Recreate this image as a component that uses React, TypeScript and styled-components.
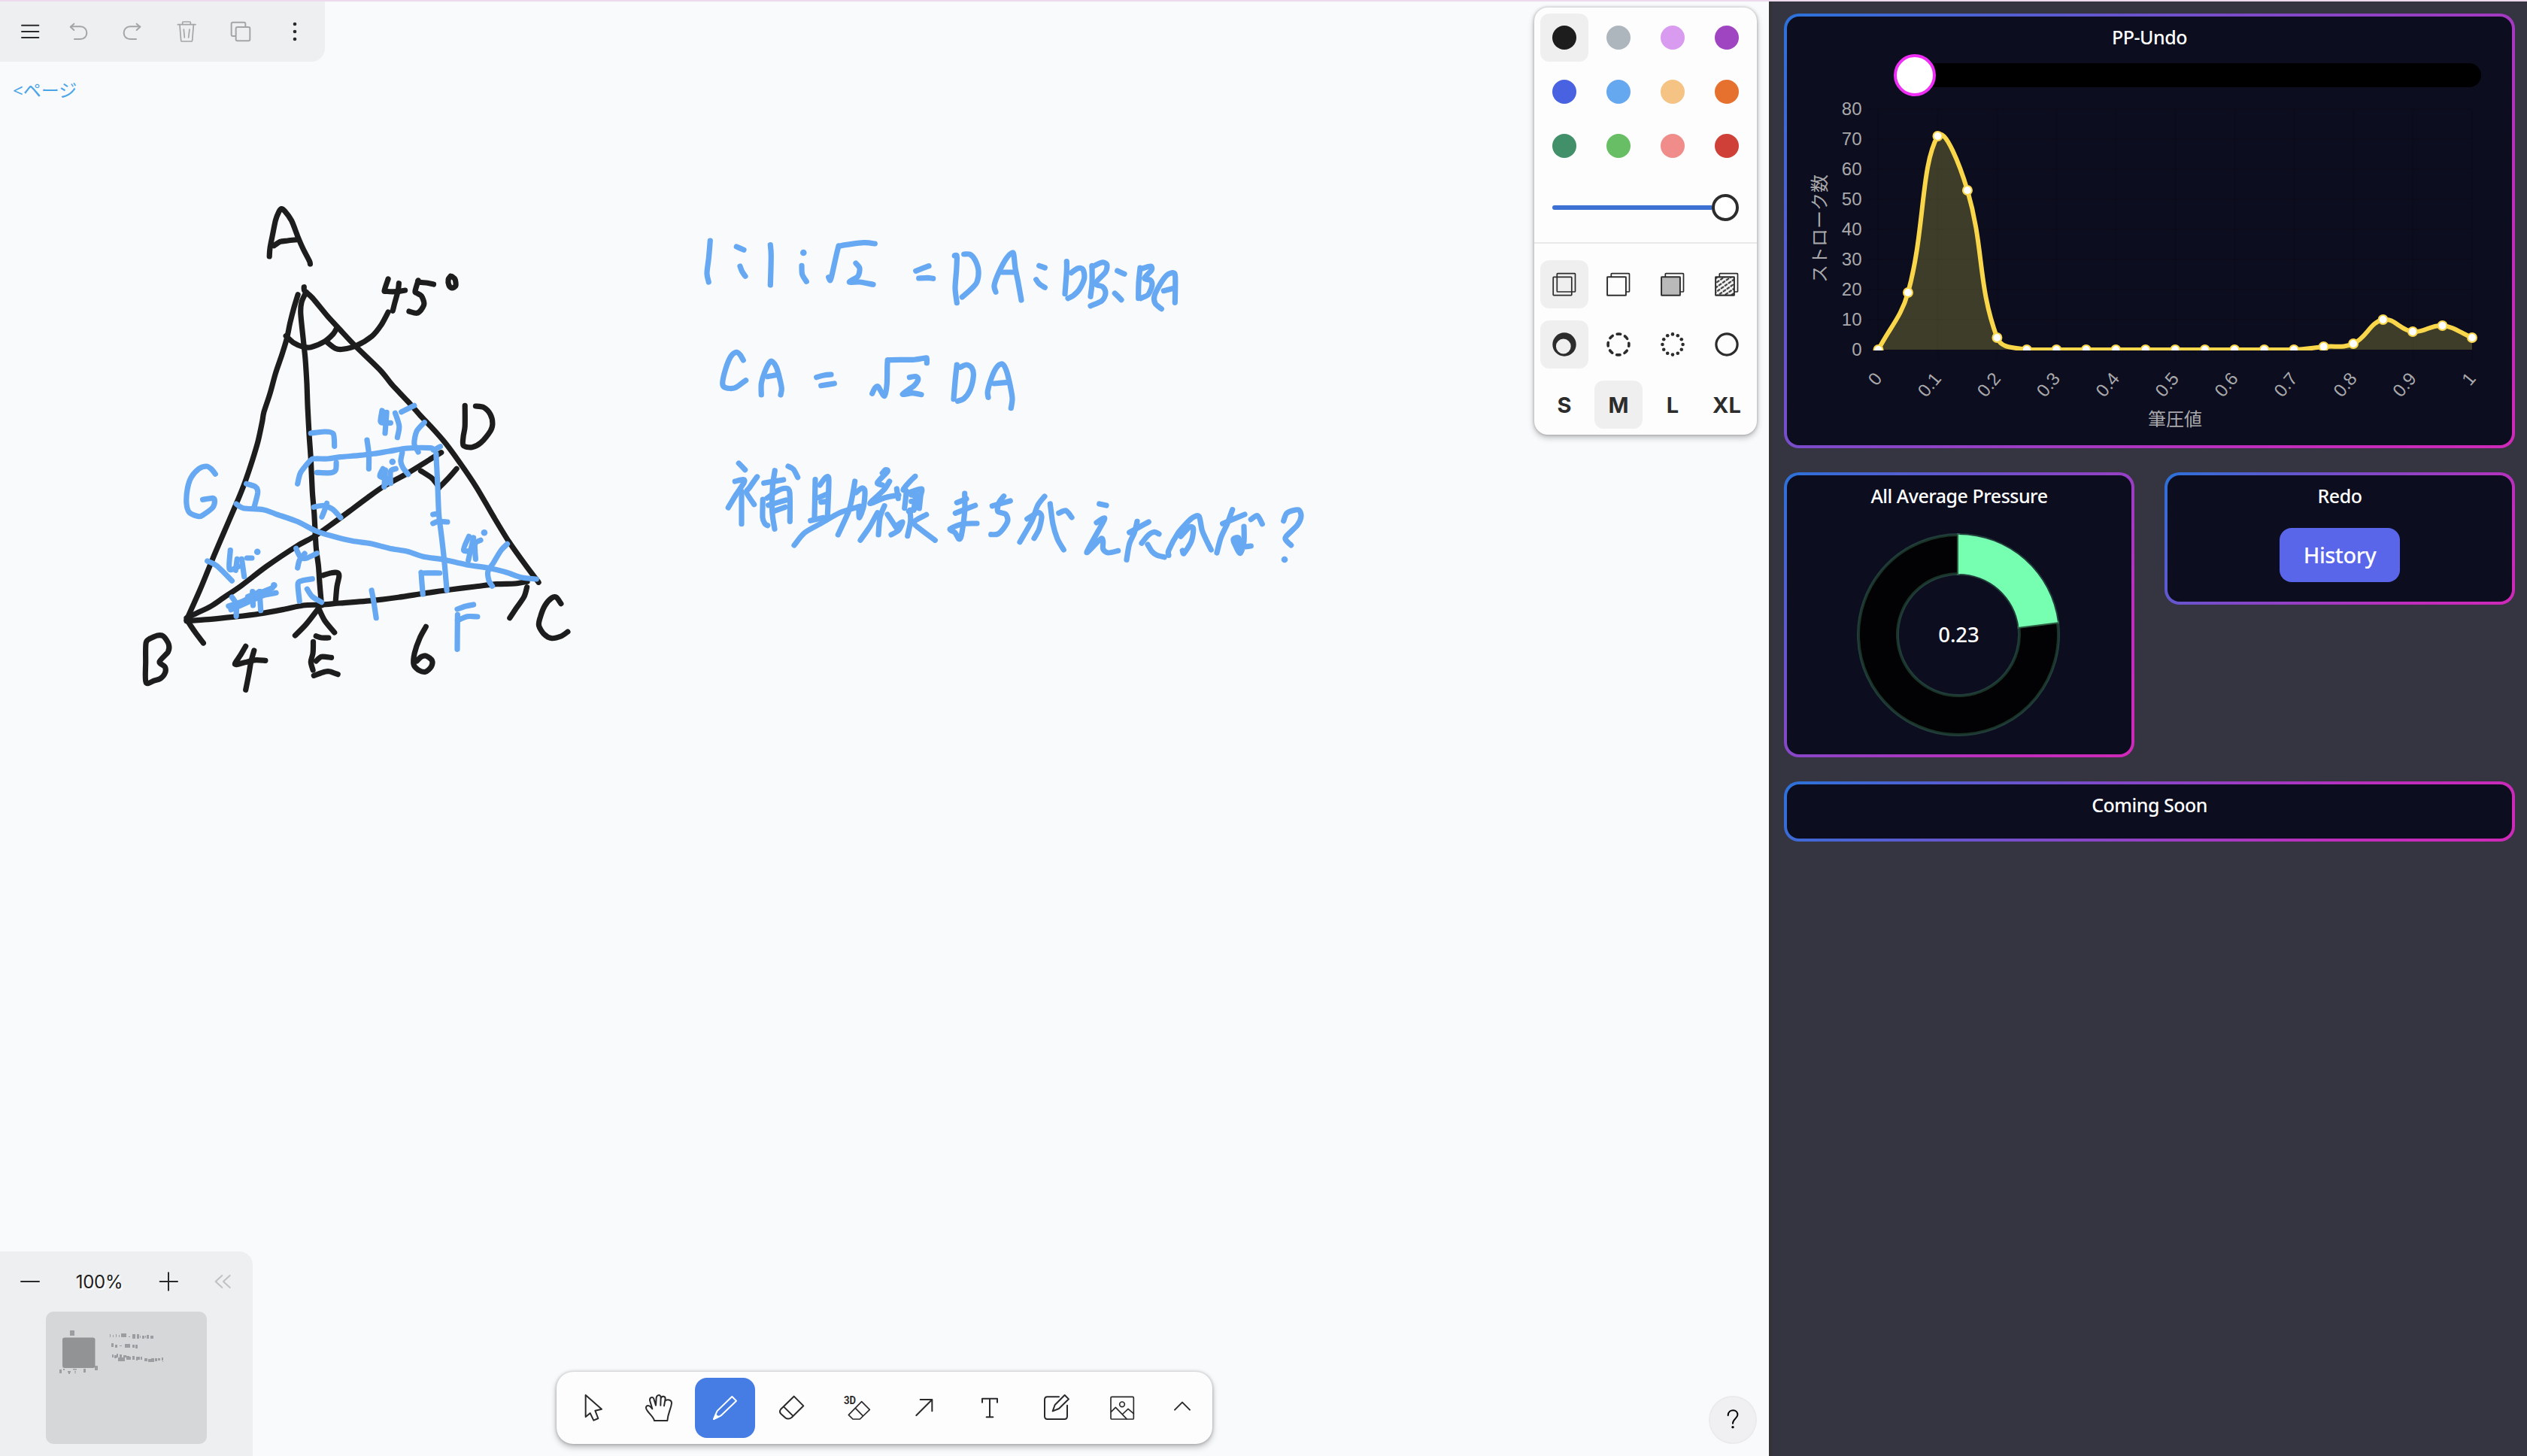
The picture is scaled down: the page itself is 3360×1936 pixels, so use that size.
import React from "react";
import styled, { createGlobalStyle } from "styled-components";

const UI_FONT = `"Noto Sans", "Noto Sans CJK JP", sans-serif`;
const AXIS_FONT = `"Liberation Sans", "Noto Sans CJK JP", sans-serif`;
const INK = "#1d1d1d";
const BLUE = "#66a8f2";

const GlobalStyle = createGlobalStyle`
  *, *::before, *::after { box-sizing: border-box; }
  html, body { margin: 0; padding: 0; }
  body { font-family: ${UI_FONT}; overflow: hidden; }
  svg { display: block; }
  button { border: 0; padding: 0; margin: 0; background: none; font: inherit; color: inherit; }
`;

/* ---------- page frame ---------- */

const Page = styled.div`
  display: grid;
  grid-template-columns: 2352px 1fr;
  width: 3360px;
  height: 1936px;
  border-top: 2px solid #efd9ec;
  background: #353541;
`;

const Board = styled.main`
  position: relative;
  display: flex;
  flex-direction: column;
  justify-content: space-between;
  height: 1934px;
  background: #f9fafc;
  overflow: hidden;
`;

const InkLayer = styled.svg`
  position: absolute;
  left: 0;
  top: -2px;
`;

const BoardTop = styled.div`
  position: relative;
  display: flex;
  justify-content: space-between;
  align-items: flex-start;
`;

const BoardBottom = styled.div`
  position: relative;
  display: grid;
  grid-template-columns: 1fr auto 1fr;
  align-items: end;
`;

const IconButton = styled.button<{ $w?: number; $dim?: boolean; $first?: boolean }>`
  display: flex;
  align-items: center;
  justify-content: center;
  width: ${(p) => p.$w ?? 72}px;
  height: 80px;
  padding-left: ${(p) => (p.$first ? 12 : 0)}px;
  color: ${(p) => (p.$dim ? "#a4a5a7" : "#2a2a2c")};
`;

const ActionBar = styled.div`
  display: flex;
  width: 432px;
  height: 80px;
  padding-right: 4px;
  background: #eeeff1;
  border-bottom-right-radius: 18px;
`;

const PageLink = styled.a`
  display: block;
  width: max-content;
  margin: 20px 0 0 17px;
  font-size: 24px;
  line-height: 36px;
  color: #4aa4e8;
`;

/* ---------- style panel ---------- */

const StylePanel = styled.section`
  width: 296px;
  height: 568px;
  margin: 8px 16px 0 0;
  background: #fdfdfd;
  border-radius: 18px;
  box-shadow: 0 4px 8px rgba(0, 0, 0, 0.24), 0 0 4px rgba(0, 0, 0, 0.26);
`;

const Cells = styled.div<{ $rowGap: number; $top: number }>`
  display: grid;
  grid-template-columns: repeat(4, 64px);
  column-gap: 8px;
  row-gap: ${(p) => p.$rowGap}px;
  padding: ${(p) => p.$top}px 8px 0;
`;

const Cell = styled.button<{ $on?: boolean }>`
  display: flex;
  align-items: center;
  justify-content: center;
  height: 64px;
  border-radius: 12px;
  background: ${(p) => (p.$on ? "#efefef" : "transparent")};
  font-family: Inter, sans-serif;
  font-weight: 700;
  font-size: 29px;
  color: #2c2c2c;
`;

const Swatch = styled.span<{ $color: string }>`
  width: 32px;
  height: 32px;
  border-radius: 50%;
  background: ${(p) => p.$color};
`;

const OpacityRow = styled.div`
  display: flex;
  align-items: center;
  height: 96px;
  padding: 3px 24px 0;
`;

const OpacityLine = styled.div`
  width: 214px;
  height: 6px;
  margin-right: -2px;
  border-radius: 3px;
  background: #3c70d2;
`;

const OpacityThumb = styled.div`
  width: 36px;
  height: 36px;
  border: 4px solid #2c2c2c;
  border-radius: 50%;
  background: #fff;
`;

const Divider = styled.hr`
  height: 2px;
  margin: 0;
  border: 0;
  background: #e8e8e8;
`;

/* ---------- bottom widgets ---------- */

const Navigator = styled.div`
  width: 336px;
  height: 272px;
  background: #eeeff1;
  border-top-right-radius: 18px;
`;

const ZoomRow = styled.div`
  display: flex;
  align-items: center;
  height: 80px;
  padding: 0 4px;
`;

const ZoomLabel = styled.div`
  width: 112px;
  text-align: center;
  font-family: Inter, sans-serif;
  font-size: 24px;
  letter-spacing: -0.3px;
  color: #1d1d1d;
  text-shadow: 2px 2px 0 #fff;
`;

const Minimap = styled.div`
  width: 214px;
  height: 176px;
  margin-left: 61px;
  border-radius: 10px;
  background: #d6d7d9;
  overflow: hidden;
`;

const ToolBar = styled.div`
  display: flex;
  width: 872px;
  height: 96px;
  margin-bottom: 16px;
  padding: 0 4px;
  background: #fdfdfd;
  border-radius: 22px;
  box-shadow: 0 4px 8px rgba(0, 0, 0, 0.26), 0 0 4px rgba(0, 0, 0, 0.24);
`;

const Tool = styled.button<{ $on?: boolean; $w?: number }>`
  display: flex;
  align-items: center;
  justify-content: center;
  width: ${(p) => (p.$w ?? 88) - 8}px;
  height: 80px;
  margin: 8px 4px;
  border-radius: 16px;
  background: ${(p) => (p.$on ? "#467de5" : "transparent")};
  color: ${(p) => (p.$on ? "#fff" : "#2a2a2c")};
`;

const HelpButton = styled.button`
  justify-self: end;
  display: flex;
  align-items: center;
  justify-content: center;
  width: 64px;
  height: 64px;
  margin: 0 16px 16px 0;
  border: 2px solid #ebebee;
  border-radius: 50%;
  background: #f0f0f2;
`;

/* ---------- dashboard ---------- */

const Dashboard = styled.aside`
  display: flex;
  flex-direction: column;
  gap: 32px;
  height: 1934px;
  padding: 16px 16px 0;
  border-left: 4px solid #333336;
  background: #353541;
`;

const CardRow = styled.div`
  display: grid;
  grid-template-columns: 1fr 1fr;
  column-gap: 40px;
  align-items: start;
`;

const Card = styled.section<{ $h: number }>`
  display: flex;
  flex-direction: column;
  align-items: center;
  height: ${(p) => p.$h}px;
  border: 4px solid transparent;
  border-radius: 20px;
  background:
    linear-gradient(#0c0d1e, #0c0d1e) padding-box,
    linear-gradient(135deg, #2b72da 0%, #7a4cca 38%, #c02dbc 78%, #cf29b8 100%) border-box;
`;

const CardTitle = styled.h2`
  margin: 9px 0 1px;
  font-size: 25px;
  font-weight: 500;
  line-height: 36px;
  letter-spacing: -0.5px;
  color: #fff;
`;

const PressureTrack = styled.div`
  align-self: flex-start;
  display: flex;
  align-items: center;
  width: 777px;
  height: 32px;
  margin: 16px 0 12px 146px;
  border-radius: 16px;
  background: #000;
`;

const PressureThumb = styled.div`
  width: 56px;
  height: 56px;
  margin-left: -4px;
  border: 4px solid #ee2df5;
  border-radius: 50%;
  background: #fff;
`;

const HistoryButton = styled.button`
  width: 160px;
  height: 72px;
  margin-top: 24px;
  padding-bottom: 2px;
  border-radius: 16px;
  background: #5a66ea;
  color: #fff;
  font-size: 29px;
  font-weight: 500;
  letter-spacing: -0.5px;
`;

const DonutWrap = styled.div`
  margin-top: 26px;
`;

/* ---------- icons ---------- */

/** Stroked icon on a 120-unit canvas; cx/cy give the middle of the drawing. */
function Glyph({ cx, cy, w = 6, children }: { cx: number; cy: number; w?: number; children: React.ReactNode }) {
  return (
    <svg
      width={40}
      height={40}
      viewBox={`${cx - 60} ${cy - 60} 120 120`}
      fill="none"
      stroke="currentColor"
      strokeWidth={w}
      strokeLinecap="round"
      strokeLinejoin="round"
    >
      {children}
    </svg>
  );
}

const actions = [
  { cx: 120, first: true, w: 68, art: <path d="M87 101H154M87 126H154M87 150H154" /> },
  { cx: 312, dim: true, art: <path d="M297 156H321C337 156 346 144 346 131C346 118 337 106 321 106H282M295 95L281 107L295 120" /> },
  { cx: 528, dim: true, art: <path d="M543 156H519C503 156 494 144 494 131C494 118 503 106 519 106H559M545 95L559 107L545 120" /> },
  {
    cx: 744,
    dim: true,
    art: (
      <path
        strokeWidth={5}
        d="M709 98H780M728 97V90Q728 87 731 87H757Q760 87 760 90V97M717 100L722 161Q722 165 726 165H763Q767 165 767 161L772 100M733 117L736 150M756 117L752 150"
      />
    ),
  },
  {
    cx: 960,
    dim: true,
    art: (
      <>
        <rect x="941" y="108" width="56" height="55" rx="6" />
        <path d="M938 144H929Q923 144 923 138V95Q923 89 929 89H973Q979 89 979 95V105" />
      </>
    ),
  },
  {
    cx: 1176,
    art: (
      <g fill="currentColor" stroke="none">
        <circle cx="1176" cy="96" r="7" />
        <circle cx="1176" cy="126" r="7" />
        <circle cx="1176" cy="156" r="7" />
      </g>
    ),
  },
];

const tools = [
  { cx: 174, art: <path d="M146 135V222L164 207L178 236L196 228L184 197L210 191Z" /> },
  {
    cx: 438,
    art: (
      <path d="M420 237C418 222 396 208 388 190C383 177 397 172 407 184L412 190L402 156C401 142 415 141 418 150L426 176L428 146C430 132 446 132 446 145L445 176M446 148C450 136 464 138 464 150L459 178M464 158C470 150 490 153 489 168C487 188 475 205 472 237H420" />
    ),
  },
  {
    cx: 702,
    on: true,
    art: (
      <>
        <path d="M657 231L669 202Q670 199 673 196L730 141L747 158L690 213Q687 216 684 218Z" />
        <path d="M657 231L665 210Q668 218 678 221Z" fill="currentColor" strokeWidth={3} />
      </>
    ),
  },
  { cx: 966, art: <path d="M924 192L977 140L1015 178L968 224Q956 234 943 226L926 211Q917 202 924 192ZM936 181L973 218" /> },
  {
    cx: 1230,
    art: (
      <>
        <path strokeWidth={5} d="M1195 214L1247 161L1279 193L1240 231H1212ZM1222 187L1252 218" />
        <text
          x="1176"
          y="172"
          fontFamily="Roboto, sans-serif"
          fontWeight={700}
          fontSize={45}
          fill="currentColor"
          stroke="none"
          textLength={48}
          lengthAdjust="spacingAndGlyphs"
        >
          3D
        </text>
      </>
    ),
  },
  { cx: 174, art: <path d="M145 216L208 153M161 153H208V199" /> },
  { cx: 438, art: <path d="M408 164V149H468V164M438 149V223M425 223H451" /> },
  {
    cx: 702,
    art: <path d="M714 142H668Q657 142 657 153V220Q657 231 668 231H736Q747 231 747 220V176M689 199L698 174L737 135L753 151L714 189Z" />,
  },
  {
    cx: 966,
    art: (
      <g strokeWidth={5}>
        <rect x="921" y="142" width="91" height="89" rx="4" />
        <circle cx="966" cy="172" r="10" />
        <path d="M922 202L940 184L984 230M969 210L990 190L1012 209" />
      </g>
    ),
  },
  { cx: 1206, w: 72, art: <path d="M1176 194L1206 164L1236 194" /> },
];

function Squares({ fill }: { fill: "none" | "semi" | "solid" | "pattern" }) {
  const faces = { none: "none", semi: "#fdfdfd", solid: "#b9b9b9", pattern: "url(#hatch)" };
  return (
    <svg width={32} height={32} viewBox="0 0 32 32" stroke="#2c2c2c" strokeWidth={1.7}>
      <defs>
        <pattern id="hatch" width="6" height="5" patternUnits="userSpaceOnUse" patternTransform="rotate(-35)">
          <path d="M0.8 2.5H4" stroke="#1d1d1d" strokeWidth="2.2" strokeLinecap="round" />
        </pattern>
      </defs>
      <rect x="6.3" y="1.6" width="24.2" height="24.4" rx="0.8" fill="none" />
      {fill !== "none" && <rect x="1.2" y="6.4" width="24.6" height="24.2" fill="#fdfdfd" />}
      <rect x="1.2" y="6.4" width="24.6" height="24.2" rx="0.8" fill={faces[fill]} />
    </svg>
  );
}

function Rings({ dash }: { dash: "draw" | "dashed" | "dotted" | "solid" }) {
  return (
    <svg width={32} height={32} viewBox="0 0 32 32" fill="none" stroke="#2c2c2c">
      {dash === "draw" && (
        <path
          fill="#2c2c2c"
          stroke="none"
          fillRule="evenodd"
          d="M16 0.3A15.7 15.7 0 1 1 16 31.7A15.7 15.7 0 1 1 16 0.3ZM14.8 8.6A9.9 9.9 0 1 0 14.8 28.4A9.9 9.9 0 1 0 14.8 8.6Z"
        />
      )}
      {dash === "dashed" && (
        <circle cx="16" cy="16" r="13.9" strokeWidth="3.6" strokeLinecap="round" strokeDasharray="4.6 6.317" strokeDashoffset="2.3" />
      )}
      {dash === "dotted" &&
        Array.from({ length: 12 }, (_, i) => (
          <circle
            key={i}
            cx={16 + 13.6 * Math.cos((i * Math.PI) / 6)}
            cy={16 + 13.6 * Math.sin((i * Math.PI) / 6)}
            r="2.3"
            fill="#2c2c2c"
            stroke="none"
          />
        ))}
      {dash === "solid" && <circle cx="16" cy="16" r="14.1" strokeWidth="3.2" />}
    </svg>
  );
}

/* ---------- ink ---------- */

type Pt = [number, number];
type Sheet = { x: number; y: number; sx: number; sy: number; color: string; strokes: string };

/** Each sheet lists pen strokes separated by "/", in its own grid of units. */
const sheets: Sheet[] = [
  {
    x: 150, y: 250, sx: 2.45, sy: 3, color: INK,
    strokes: `510,273 512,240 520,190 530,130 541,95 549,83 560,92 582,130 603,195 620,243 640,290 643,303
    / 525,230 545,214 570,210 600,206
    / 897,363 885,408 890,412 925,413 952,408 / 932,380 929,410 918,460 912,490
    / 1045,384 1025,379 995,375 995,370 985,412 990,419 1005,430 1014,460 1005,485 990,499 965,492
    / 1100,352 1093,365 1095,388 1105,399 1117,390 1115,365 1105,353 1100,352
    / 564,590 590,618 618,633 645,635 690,612 718,582 730,557
    / 695,612 725,640 750,643 795,628 845,590 875,545 897,495`,
  },
  {
    x: 150, y: 560, sx: 2.45, sy: 3, color: INK,
    strokes: `603,-505 590,-452 577,-390 567,-330 550,-262 530,-190 512,-110 492,-35 487,0 473,80 455,155 430,245 402,330 365,435 325,550 285,670 240,793
    / 630,-515 615,-475 612,-430 620,-330 627,-250 632,-150 635,-50 640,60 645,150 650,280 656,370 662,500 670,580 674,650 680,735
    / 623,-535 625,-520 650,-492 700,-418 740,-365 790,-300 870,-205 910,-145 960,-80 1000,-25 1035,20 1085,90 1130,165 1185,265 1240,380 1290,480 1345,575 1387,643
    / 1147,-62 1147,20 1142,60 1142,97 1170,104 1200,85 1230,40 1237,10 1230,-27 1208,-55 1182,-60
    / 240,785 275,765 320,738 360,705 420,655 500,580 600,498 656,460 720,405 770,360 830,305 885,258 960,208 1030,155 1070,125
    / 240,797 320,790 400,780 480,768 560,750 620,735 680,732 740,726 850,715 930,703 1010,688 1100,672 1180,660 1250,650 1310,648 1350,640
    / 245,800 270,845 295,885 / 668,750 630,810 594,855 / 670,745 690,795 722,843
    / 685,615 712,605 733,605 737,620 730,660 726,715
    / 1349,662 1340,700 1315,745 1293,785
    / 1003,198 1040,228 1062,262 1065,262 1095,225 1120,190
    / 120,868 108,885 107,960 108,1042 135,1035 155,1027 170,1005 170,980 152,960 180,920 182,890 165,858 145,855 120,868
    / 433,898 415,935 398,970 430,962 465,953 497,955 / 460,915 450,960 443,1010 433,1072
    / 653,880 652,925 645,960 652,993 / 662,857 680,864 703,864 / 662,957 680,940 712,943 / 655,1015 690,1000 705,998 733,1010
    / 1020,820 1000,865 983,925 980,970 995,992 1018,1000 1037,980 1040,955 1022,937 1005,940 990,957
    / 1460,728 1445,703 1430,705 1408,735 1393,780 1388,815 1405,850 1430,866 1460,858 1482,840`,
  },
  {
    x: 150, y: 560, sx: 2.45, sy: 3, color: BLUE,
    strokes: `334,211 320,190 305,180 280,190 255,225 243,270 240,330 250,365 280,380 293,375 325,345 332,318 325,307 293,313
    / 435,250 465,262 472,285 460,345
    / 402,330 425,347 490,353 530,370 600,400 660,437 710,457 780,478 840,488 900,507 960,520 1010,540 1080,553 1150,572 1230,587 1280,602 1330,623 1380,630
    / 645,48 690,42 718,50 722,100
    / 602,250 612,205 645,155 660,150 700,150 740,143 800,137 850,130 900,120 960,108 1035,107 1045,115 1067,101
    / 665,205 710,206 726,195 728,165 / 828,75 834,130 834,190
    / 1015,5 990,40 982,90 995,123
    / 877,-42 872,0 880,7 905,7 / 892,-35 887,48 / 884,-35 883,0 / 920,-32 933,20 927,65 / 940,-37 982,-62
    / 943,125 938,160 945,185 962,212
    / 880,190 870,220 900,230 / 888,195 884,262 / 922,190 905,200 905,248 / 880,210 890,250 / 911,162
    / 1053,130 1058,250 1062,370 1070,450 1080,560 1088,675
    / 1043,372 1055,370 / 1043,408 1060,400 1090,402
    / 1010,690 1005,610 1010,606 1065,606
    / 1285,490 1265,515 1240,565 1222,600 1225,635 1236,658
    / 1160,460 1143,515 1180,515 / 1175,465 1158,555 / 1198,475 1180,490 1182,550 / 1210,445
    / 655,343 685,337 715,350 742,385 / 697,328 690,355 681,382
    / 597,508 610,540 630,547 665,527 / 625,528 608,555 602,585
    / 608,718 603,650 615,637 650,629 / 633,670 650,700 680,722
    / 308,558 340,578 388,637
    / 383,515 380,590 410,580 / 405,550 400,595 / 420,550 428,620 / 437,546 453,546 / 471,521
    / 377,738 420,720 470,690 520,665 / 385,752 440,722 490,695 532,685 / 388,702 402,730 402,778 / 455,680 457,735 / 478,680 482,755 / 440,700 480,680 / 525,655
    / 843,675 850,720 858,785
    / 1122,750 1150,738 1175,732 / 1123,772 1122,910 / 1123,795 1155,779 1188,780`,
  },
  {
    x: 900, y: 280, sx: 3, sy: 3, color: BLUE,
    strokes: `133,120 127,190 120,250 127,285 / 238,144 267,157 / 252,222 260,243 273,262
    / 373,137 376,180 373,297 / 505,168 / 498,220 500,255 517,283
    / 605,266 612,278 620,250 643,150 655,140 745,128 790,132
    / 714,210 729,230 722,262 688,285 730,285 783,295
    / 953,241 1005,221 / 965,270 1000,268 1022,271
    / 1108,180 1117,182 1115,240 1110,310 1117,368 / 1145,174 1170,175 1190,198 1203,240 1197,285 1175,312 1138,345
    / 1272,325 1266,298 1285,245 1315,190 1338,168 1344,178 1350,230 1362,290 1374,357 / 1297,246 1350,246
    / 265,597 252,575 237,565 215,582 195,630 182,690 195,707 232,707 275,677
    / 337,735 337,690 350,645 370,605 382,603 397,625 410,670 418,710 414,735 / 362,662 402,655
    / 557,665 590,656 615,654 / 575,698 628,690
    / 779,730 790,708 803,703 828,740 838,690 840,605 850,596 940,595 990,588 997,590 997,608
    / 928,665 955,662 962,675 945,700 900,732 940,728 975,734
    / 1117,615 1110,680 1104,752 / 1130,625 1155,615 1177,628 1183,660 1170,715 1145,750 1120,760
    / 1242,745 1240,720 1258,660 1280,620 1300,613 1315,640 1330,700 1338,750 1333,788 / 1265,690 1322,685
    / 247,1008 272,1034 / 232,1080 265,1073 268,1085 235,1135 205,1185 / 258,1120 258,1250 / 320,1062 290,1105 278,1125 308,1172
    / 347,1087 425,1074 / 391,1037 382,1100 380,1200 390,1270 / 343,1152 342,1225 352,1250 362,1256
    / 360,1147 400,1118 435,1108 450,1125 451,1240 / 365,1175 435,1155 / 385,1200 432,1183 / 444,1020 465,1032 482,1064
    / 552,1073 549,1225 / 570,1095 590,1068 603,1062 606,1085 601,1215 / 565,1145 600,1130 / 575,1163 600,1160 / 533,1237 585,1225
    / 468,1335 510,1285 580,1245 650,1205 730,1180 / 710,1080 700,1140 685,1200 643,1293 / 715,1125 738,1107 750,1120 745,1180 728,1225 726,1190
    / 820,1047 832,1034 840,1041 800,1085 820,1095 / 848,1080 825,1115 770,1168 830,1145 885,1135 / 877,1110 883,1148
    / 828,1178 810,1225 804,1293 / 800,1205 770,1260 732,1315 / 840,1212 875,1265 / 855,1293 885,1275 900,1243 880,1255
    / 940,1070 951,1060 930,1080 903,1113 915,1120 908,1187 / 925,1125 975,1110 972,1140 967,1188 / 935,1135 968,1138 / 935,1160 965,1162 / 925,1200 965,1180 / 955,1120 945,1195
    / 930,1195 932,1240 920,1298 / 995,1213 945,1243 970,1270 1030,1315
    / 1117,1165 1155,1150 / 1111,1207 1190,1176 / 1148,1128 1148,1200 1135,1295 1125,1310 1110,1285 1090,1270 1140,1250 1197,1248
    / 1258,1178 1330,1158 / 1304,1139 1285,1165 1280,1200 1310,1210 1320,1235 1305,1265 1280,1290 1253,1292`,
  },
  {
    x: 1330, y: 300, sx: 3, sy: 3, color: BLUE,
    strokes: `155,160 178,168 / 143,215 155,232 178,247
    / 265,143 265,180 258,272 / 283,188 310,170 330,175 335,210 315,255 290,280 270,290
    / 366,160 366,230 360,283 / 366,165 405,147 425,155 420,185 380,230 410,245 420,270 405,300 360,320
    / 467,180 495,193 / 457,270 483,296
    / 558,168 552,230 551,290 / 570,170 600,162 603,178 575,210 600,218 605,240 590,275 560,290
    / 643,332 618,310 615,280 640,230 665,197 690,188 698,205 697,307 / 652,260 692,250
    / 177,1080 150,1115 125,1180 78,1262 / 107,1170 150,1145 165,1160 155,1210 135,1247 / 199,1110 210,1190 228,1250 253,1293 / 233,1147 262,1137 285,1164
    / 395,1110 423,1116 / 384,1185 410,1168 412,1180 345,1303 400,1250 410,1260 410,1290 430,1305 470,1297
    / 515,1224 592,1182 / 546,1180 535,1225 515,1270 504,1333 / 564,1267 590,1235 615,1222 633,1230 / 588,1272 605,1300 625,1315 655,1322
    / 672,1315 672,1295 710,1225 745,1185 770,1163 793,1160 805,1215 820,1250 841,1293 / 720,1240 755,1203 770,1210 762,1260 733,1307 727,1296
    / 887,1189 975,1152 / 926,1133 905,1190 880,1245 864,1305 / 972,1200 972,1260 957,1307 935,1270 930,1250 950,1245 957,1280 1000,1278 / 1000,1172 1025,1157 1045,1190
    / 1130,1178 1142,1148 1165,1137 1192,1135 1200,1160 1185,1195 1140,1240 1140,1255 1160,1275 / 1134,1332`,
  },
];

const r1 = (n: number) => Math.round(n * 10) / 10;

/** Smooth curve through the sampled pen positions. */
function inkPath(pts: Pt[]): string {
  if (pts.length === 1) return `M${r1(pts[0][0])} ${r1(pts[0][1])}h0.01`;
  const k = 1 / 7;
  let d = `M${r1(pts[0][0])} ${r1(pts[0][1])}`;
  for (let i = 0; i < pts.length - 1; i++) {
    const p0 = pts[i - 1] ?? pts[i];
    const p1 = pts[i];
    const p2 = pts[i + 1];
    const p3 = pts[i + 2] ?? p2;
    d += `C${r1(p1[0] + (p2[0] - p0[0]) * k)} ${r1(p1[1] + (p2[1] - p0[1]) * k)} ${r1(p2[0] - (p3[0] - p1[0]) * k)} ${r1(
      p2[1] - (p3[1] - p1[1]) * k
    )} ${r1(p2[0])} ${r1(p2[1])}`;
  }
  return d;
}

function Ink() {
  return (
    <InkLayer width={2352} height={1936} viewBox="0 0 2352 1936" fill="none" strokeLinecap="round" strokeLinejoin="round">
      {sheets.map((s, i) => (
        <g key={i} stroke={s.color}>
          {s.strokes.split("/").map((raw, j) => {
            const pts = raw
              .trim()
              .split(/\s+/)
              .map((p) => {
                const [a, b] = p.split(",").map(Number);
                return [s.x + a / s.sx, s.y + b / s.sy] as Pt;
              });
            return <path key={j} d={inkPath(pts)} strokeWidth={pts.length === 1 ? 8.6 : 7.2} />;
          })}
        </g>
      ))}
    </InkLayer>
  );
}

/* ---------- minimap ---------- */

const marks: [number, number, number, number][] = [
  [32, 25, 6, 7], [18, 77, 3, 5], [65, 72, 4, 6], [50, 76, 3, 5], [23, 76, 2, 2], [29, 79, 4, 2], [30, 81, 2, 2], [36, 76, 5, 1.5], [38, 79, 2, 1], [38, 81, 2, 1],
  [85, 30, 1, 4], [89, 31, 1, 3], [93, 30, 1, 4], [97, 31, 1, 3], [100, 29, 7, 5], [110, 33, 2, 1], [115, 30, 4, 6], [121, 30, 3, 6], [125, 32, 1, 3], [128, 32, 3, 4],
  [132, 32, 1, 3], [134, 31, 3, 5], [139, 32, 4, 4],
  [87, 42, 3, 5], [92, 44, 3, 4], [98, 45, 3, 1], [105, 43, 7, 5], [115, 44, 3, 4], [119, 44, 3, 5],
  [88, 57, 2, 4], [91, 58, 3, 4], [94, 56, 2, 5], [96, 61, 9, 5], [98, 57, 3, 4], [103, 58, 4, 3], [107, 59, 4, 5], [111, 60, 2, 4], [115, 59, 3, 5], [120, 60, 2, 5], [122, 60, 3, 4],
  [126, 60, 2, 4], [131, 62, 4, 4], [136, 63, 4, 4], [140, 62, 4, 5], [145, 62, 3, 4], [149, 62, 3, 3], [154, 61, 2, 4], [155, 66, 1, 1],
];

/* ---------- charts ---------- */

const counts = [0, 19, 71, 53, 4, 0, 0, 0, 0, 0, 0, 0, 0, 0, 0, 1, 2, 10, 6, 8, 4];
const area = { left: 121.5, right: 911, top: 17, bottom: 337 };
const px = (i: number) => area.left + ((area.right - area.left) * i) / (counts.length - 1);
const py = (v: number) => area.bottom - ((area.bottom - area.top) * v) / 80;

function splinePath(): string {
  const pts = counts.map((v, i) => [px(i), py(v)] as Pt);
  const clampY = (y: number) => Math.max(area.top, Math.min(area.bottom, y));
  const ctrl = pts.map((c, i) => {
    const p = pts[i - 1] ?? c;
    const n = pts[i + 1] ?? c;
    const a = Math.hypot(c[0] - p[0], c[1] - p[1]);
    const b = Math.hypot(n[0] - c[0], n[1] - c[1]);
    const fa = (0.4 * a) / (a + b);
    const fb = (0.4 * b) / (a + b);
    return {
      before: [c[0] - fa * (n[0] - p[0]), clampY(c[1] - fa * (n[1] - p[1]))],
      after: [c[0] + fb * (n[0] - p[0]), clampY(c[1] + fb * (n[1] - p[1]))],
    };
  });
  return pts
    .map((p, i) => (i === 0 ? `M${p.join(" ")}` : `C${ctrl[i - 1].after.join(" ")} ${ctrl[i].before.join(" ")} ${p.join(" ")}`))
    .join("");
}

const ChartText = styled.text`
  font-family: ${AXIS_FONT};
  font-size: 24px;
  fill: #a9a9ac;
`;

function PressureChart() {
  const line = splinePath();
  return (
    <svg width={964} height={464} viewBox="0 0 964 464">
      <clipPath id="plot">
        <rect x="0" y="0" width="964" height="338" />
      </clipPath>
      <g stroke="#000" strokeOpacity={0.08} strokeWidth={2}>
        {Array.from({ length: 9 }, (_, i) => (
          <line key={i} x1={area.left - 14} x2={area.right} y1={py(i * 10)} y2={py(i * 10)} />
        ))}
        {Array.from({ length: 11 }, (_, i) => (
          <line key={i} x1={px(i * 2)} x2={px(i * 2)} y1={area.top} y2={area.bottom + 14} />
        ))}
      </g>
      <g clipPath="url(#plot)">
        <path d={`${line}V${area.bottom}H${area.left}Z`} fill="#f6f255" fillOpacity={0.21} />
        <path d={line} fill="none" stroke="#fad74a" strokeWidth={6} strokeLinejoin="round" />
        {counts.map((v, i) => (
          <circle key={i} cx={px(i)} cy={py(v)} r={6} fill="#fff" stroke="#fad74a" strokeWidth={2} />
        ))}
      </g>
      {Array.from({ length: 9 }, (_, i) => (
        <ChartText key={i} x={99.5} y={py(i * 10) + 8} textAnchor="end">
          {i * 10}
        </ChartText>
      ))}
      {Array.from({ length: 11 }, (_, i) => (
        <ChartText key={i} textAnchor="end" transform={`translate(${px(i * 2) + 6} ${area.bottom + 39}) rotate(-50)`}>
          {i / 10}
        </ChartText>
      ))}
      <ChartText x={516} y={438} textAnchor="middle">
        筆圧値
      </ChartText>
      <ChartText textAnchor="middle" transform="translate(52 176) rotate(-90)">
        ストローク数
      </ChartText>
    </svg>
  );
}

function sector(from: number, to: number, ro: number, ri: number): string {
  const at = (t: number, r: number) =>
    `${(139 + r * Math.sin(t * 2 * Math.PI)).toFixed(2)} ${(140 - r * Math.cos(t * 2 * Math.PI)).toFixed(2)}`;
  const big = to - from > 0.5 ? 1 : 0;
  return `M${at(from, ro)}A${ro} ${ro} 0 ${big} 1 ${at(to, ro)}L${at(to, ri)}A${ri} ${ri} 0 ${big} 0 ${at(from, ri)}Z`;
}

const DonutValue = styled.text`
  font-family: ${UI_FONT};
  font-size: 27.5px;
  font-weight: 500;
  fill: #fff;
`;

function Donut({ value }: { value: number }) {
  return (
    <svg width={280} height={280} viewBox="0 0 280 280" stroke="#76ffb1" strokeOpacity={0.2} strokeWidth={4}>
      <path d={sector(value, 1, 133, 81)} fill="#020204" />
      <path d={sector(0, value, 133, 81)} fill="#76ffb1" />
      <DonutValue x={139.5} y={149.5} textAnchor="middle" stroke="none">
        {value}
      </DonutValue>
    </svg>
  );
}

/* ---------- page ---------- */

const colors = [
  "#1d1d1d", "#adb5bd", "#d99bf0", "#9f45c2",
  "#4862e2", "#66a8f0", "#f5c384", "#e6712e",
  "#42906a", "#68be64", "#f08d8a", "#cf4038",
];

export default function App() {
  return (
    <Page>
      <GlobalStyle />
      <Board>
        <Ink />
        <BoardTop>
          <div>
            <ActionBar>
              {actions.map((a) => (
                <IconButton key={a.cx} $w={a.w} $first={a.first} $dim={a.dim}>
                  <Glyph cx={a.cx} cy={126}>{a.art}</Glyph>
                </IconButton>
              ))}
            </ActionBar>
            <PageLink>&lt;ページ</PageLink>
          </div>
          <StylePanel>
            <Cells $rowGap={8} $top={8}>
              {colors.map((c, i) => (
                <Cell key={c} $on={i === 0}>
                  <Swatch $color={c} />
                </Cell>
              ))}
            </Cells>
            <OpacityRow>
              <OpacityLine />
              <OpacityThumb />
            </OpacityRow>
            <Divider />
            <Cells $rowGap={16} $top={22}>
              <Cell $on><Squares fill="none" /></Cell>
              <Cell><Squares fill="semi" /></Cell>
              <Cell><Squares fill="solid" /></Cell>
              <Cell><Squares fill="pattern" /></Cell>
              <Cell $on><Rings dash="draw" /></Cell>
              <Cell><Rings dash="dashed" /></Cell>
              <Cell><Rings dash="dotted" /></Cell>
              <Cell><Rings dash="solid" /></Cell>
              <Cell>S</Cell>
              <Cell $on>M</Cell>
              <Cell>L</Cell>
              <Cell>XL</Cell>
            </Cells>
          </StylePanel>
        </BoardTop>

        <BoardBottom>
          <Navigator>
            <ZoomRow>
              <IconButton>
                <Glyph cx={120} cy={162}><path d="M84 162H156" /></Glyph>
              </IconButton>
              <ZoomLabel>100%</ZoomLabel>
              <IconButton>
                <Glyph cx={672} cy={162}><path d="M638 162H708M672 127V197" /></Glyph>
              </IconButton>
              <IconButton>
                <Glyph cx={888} cy={162}>
                  <path stroke="#c0c1c3" d="M886 138L860 162L886 186M917 138L891 162L917 186" />
                </Glyph>
              </IconButton>
            </ZoomRow>
            <Minimap>
              <svg width={214} height={176} fill="#929395">
                <rect x="22" y="34.5" width="43.5" height="40.5" rx="3" />
                {marks.map(([x, y, w, h], i) => (
                  <rect key={i} x={x} y={y} width={w} height={h} opacity={0.85} />
                ))}
              </svg>
            </Minimap>
          </Navigator>
          <ToolBar>
            {tools.map((t, i) => (
              <Tool key={i} $on={t.on} $w={t.w}>
                <Glyph cx={t.cx} cy={186}>{t.art}</Glyph>
              </Tool>
            ))}
          </ToolBar>
          <HelpButton>
            <Glyph cx={192} cy={174}>
              <path d="M173 156C174 128 214 130 211 155C209 168 192 172 192 188" />
              <circle cx="192" cy="203" r="5" fill="currentColor" stroke="none" />
            </Glyph>
          </HelpButton>
        </BoardBottom>
      </Board>

      <Dashboard>
        <Card $h={578}>
          <CardTitle>PP-Undo</CardTitle>
          <PressureTrack>
            <PressureThumb />
          </PressureTrack>
          <PressureChart />
        </Card>
        <CardRow>
          <Card $h={379}>
            <CardTitle>All Average Pressure</CardTitle>
            <DonutWrap>
              <Donut value={0.23} />
            </DonutWrap>
          </Card>
          <Card $h={176}>
            <CardTitle>Redo</CardTitle>
            <HistoryButton>History</HistoryButton>
          </Card>
        </CardRow>
        <Card $h={80}>
          <CardTitle>Coming Soon</CardTitle>
        </Card>
      </Dashboard>
    </Page>
  );
}
